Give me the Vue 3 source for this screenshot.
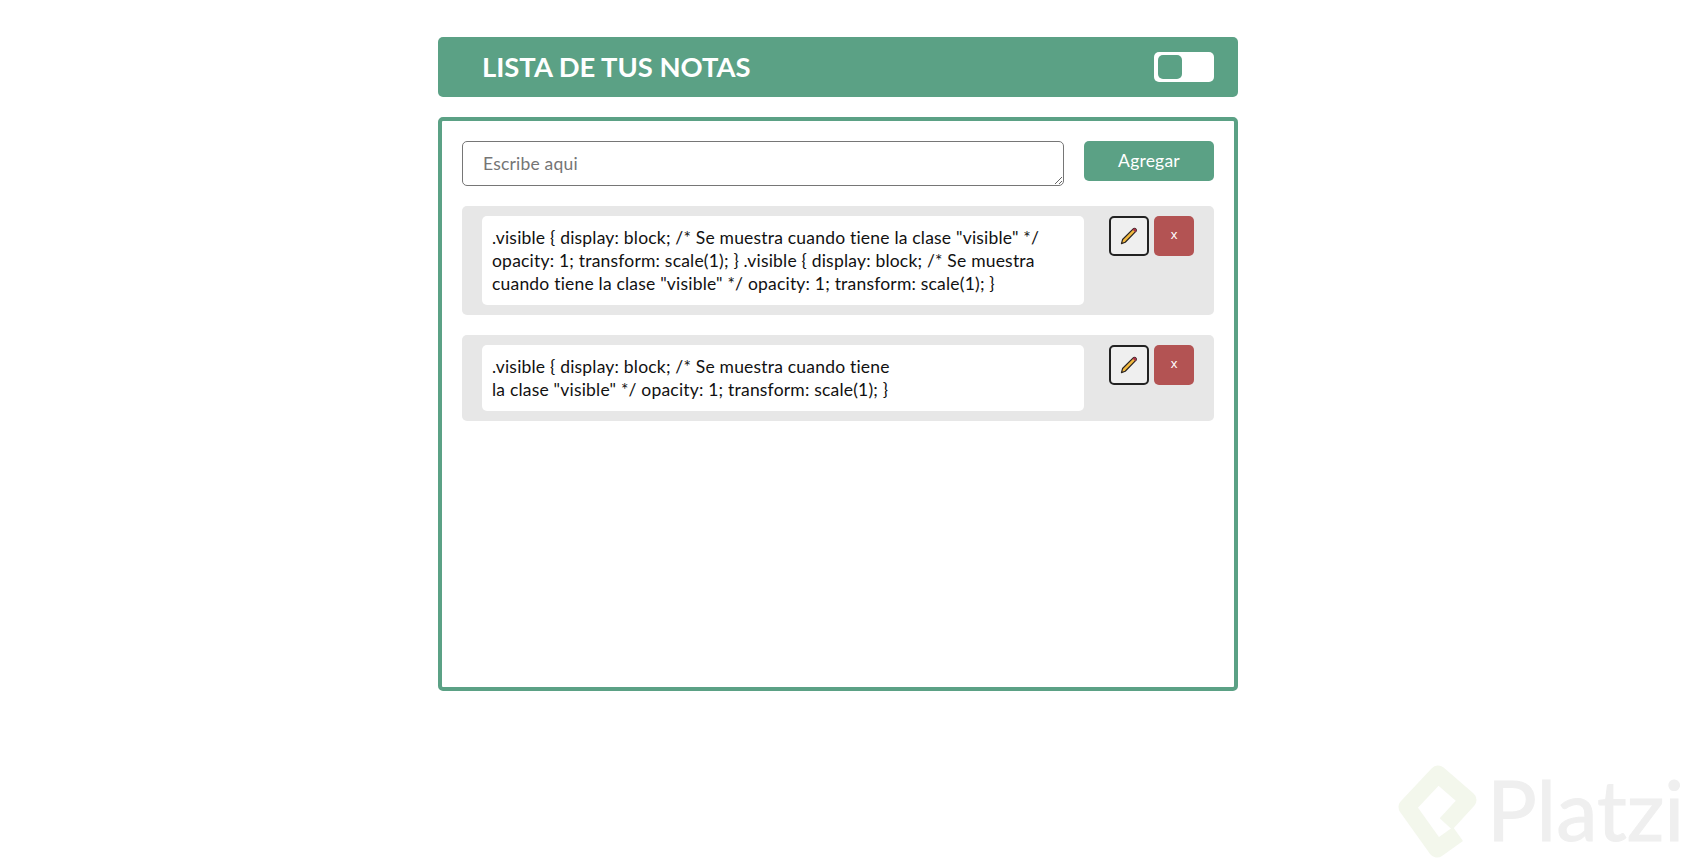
<script setup>
const notes = [
  { id: 1, lines: ['.visible { display: block; /* Se muestra cuando tiene la clase "visible" */', 'opacity: 1; transform: scale(1); } .visible { display: block; /* Se muestra', 'cuando tiene la clase "visible" */ opacity: 1; transform: scale(1); }'] },
  { id: 2, lines: ['.visible { display: block; /* Se muestra cuando tiene', 'la clase "visible" */ opacity: 1; transform: scale(1); }'] },
]
</script>

<template>
  <div class="page">
    <div class="app">
      <header class="header">
        <h1 class="title">LISTA DE TUS NOTAS</h1>
        <div class="toggle"><span class="knob"></span></div>
      </header>
      <main class="panel">
        <div class="form">
          <textarea class="input" placeholder="Escribe aqui"></textarea>
          <button class="add">Agregar</button>
        </div>
        <div class="notes">
          <div v-for="n in notes" :key="n.id" class="note">
            <div class="text">
              <div v-for="l in n.lines" :key="l">{{ l }}</div>
            </div>
            <div class="actions">
              <button class="edit" aria-label="editar">
                <svg width="20" height="20" viewBox="0 0 18 18">
                  <path d="M3.2 12.2 L12.8 2.6 a1.6 1.6 0 0 1 2.3 0 a1.6 1.6 0 0 1 0 2.3 L5.6 14.6 L2.2 15.8 Z" fill="#f2b93f" stroke="#2b2420" stroke-width="1.1" stroke-linejoin="round"/>
                  <path d="M12.2 3.2 L14.6 5.6 L15.1 4.9 a1.6 1.6 0 0 0 0-2.3 a1.6 1.6 0 0 0-2.3 0 Z" fill="#a8324a"/>
                </svg>
              </button>
              <button class="del"><span class="del-x">x</span></button>
            </div>
          </div>
        </div>
      </main>
    </div>
    <div class="watermark">
      <svg class="mark" width="86" height="96" viewBox="0 0 86 96">
        <path d="M62 72 L41 87 L11 45 L42 12 L72 38 L50 62" fill="none" stroke="#f3f7ec" stroke-width="17" stroke-linejoin="round" stroke-linecap="butt"/>
      </svg>
      <span class="brand">Platzi</span>
    </div>
  </div>
</template>

<style>
html, body { margin: 0; background: #fff; }
</style>

<style scoped>
.page {
  min-height: 868px;
  box-sizing: border-box;
  padding: 37px 0 0 438px;
  font-family: Lato, "Open Sans", sans-serif;
  color: #111;
  position: relative;
  overflow: hidden;
}
.app { width: 800px; display: flex; flex-direction: column; gap: 20px; }
.header {
  height: 60px;
  background: #5ba185;
  border-radius: 5px;
  display: flex;
  align-items: center;
  justify-content: space-between;
  padding: 0 24px 0 44px;
}
.title { margin: 0 0 2px; font-size: 27.4px; font-weight: 700; color: #fff; }
.toggle {
  width: 60px; height: 30px; box-sizing: border-box; padding: 3px 4px;
  background: #fff; border-radius: 5px; display: flex;
}
.knob { width: 24px; height: 24px; background: #5ba185; border-radius: 5px; }
.panel {
  height: 574px;
  box-sizing: border-box;
  border: 4px solid #5ba185;
  border-radius: 5px;
  padding: 20px;
  display: flex;
  flex-direction: column;
  gap: 20px;
}
.form { display: flex; justify-content: space-between; align-items: flex-start; }
.input {
  width: 602px; height: 45px; box-sizing: border-box;
  border: 1px solid #767676; border-radius: 5px;
  padding: 11px 20px; font: 17.5px Lato, sans-serif; letter-spacing: 0.2px; outline: none;
  resize: vertical;
}
.input::placeholder { color: #757575; }
.add {
  width: 130px; height: 40px; border: 0; border-radius: 5px; padding: 0 0 2px;
  background: #5ba185; color: #fff; font: 17.5px Lato, sans-serif; letter-spacing: 0.2px;
}
.notes { display: flex; flex-direction: column; gap: 20px; }
.note {
  background: #e7e7e7; border-radius: 5px;
  padding: 10px 20px;
  display: flex;
  align-items: flex-start;
}
.text {
  width: 602px; box-sizing: border-box;
  background: #fff; border-radius: 5px;
  padding: 10px;
  font-size: 17.5px; letter-spacing: 0.2px; line-height: 23px;
  color: #111;
}
.actions { display: flex; gap: 5px; margin-left: 25px; }
.edit, .del {
  width: 40px; height: 40px; box-sizing: border-box; border-radius: 5px; padding: 0;
  display: flex; align-items: center; justify-content: center;
}
.edit { background: #efefef; border: 2px solid #222; }
.del { background: #b35353; border: 0; color: #fff; font: 13.3px Arial, "Liberation Sans", sans-serif; }
.del-x { margin-bottom: 3px; }
.watermark {
  position: absolute; left: 1396px; top: 762px;
  display: flex; align-items: center; gap: 5px;
}
.brand { font-size: 83px; color: #efefef; line-height: 94px; margin-bottom: 2px; font-weight: 400; -webkit-text-stroke: 1px #efefef; }
</style>
